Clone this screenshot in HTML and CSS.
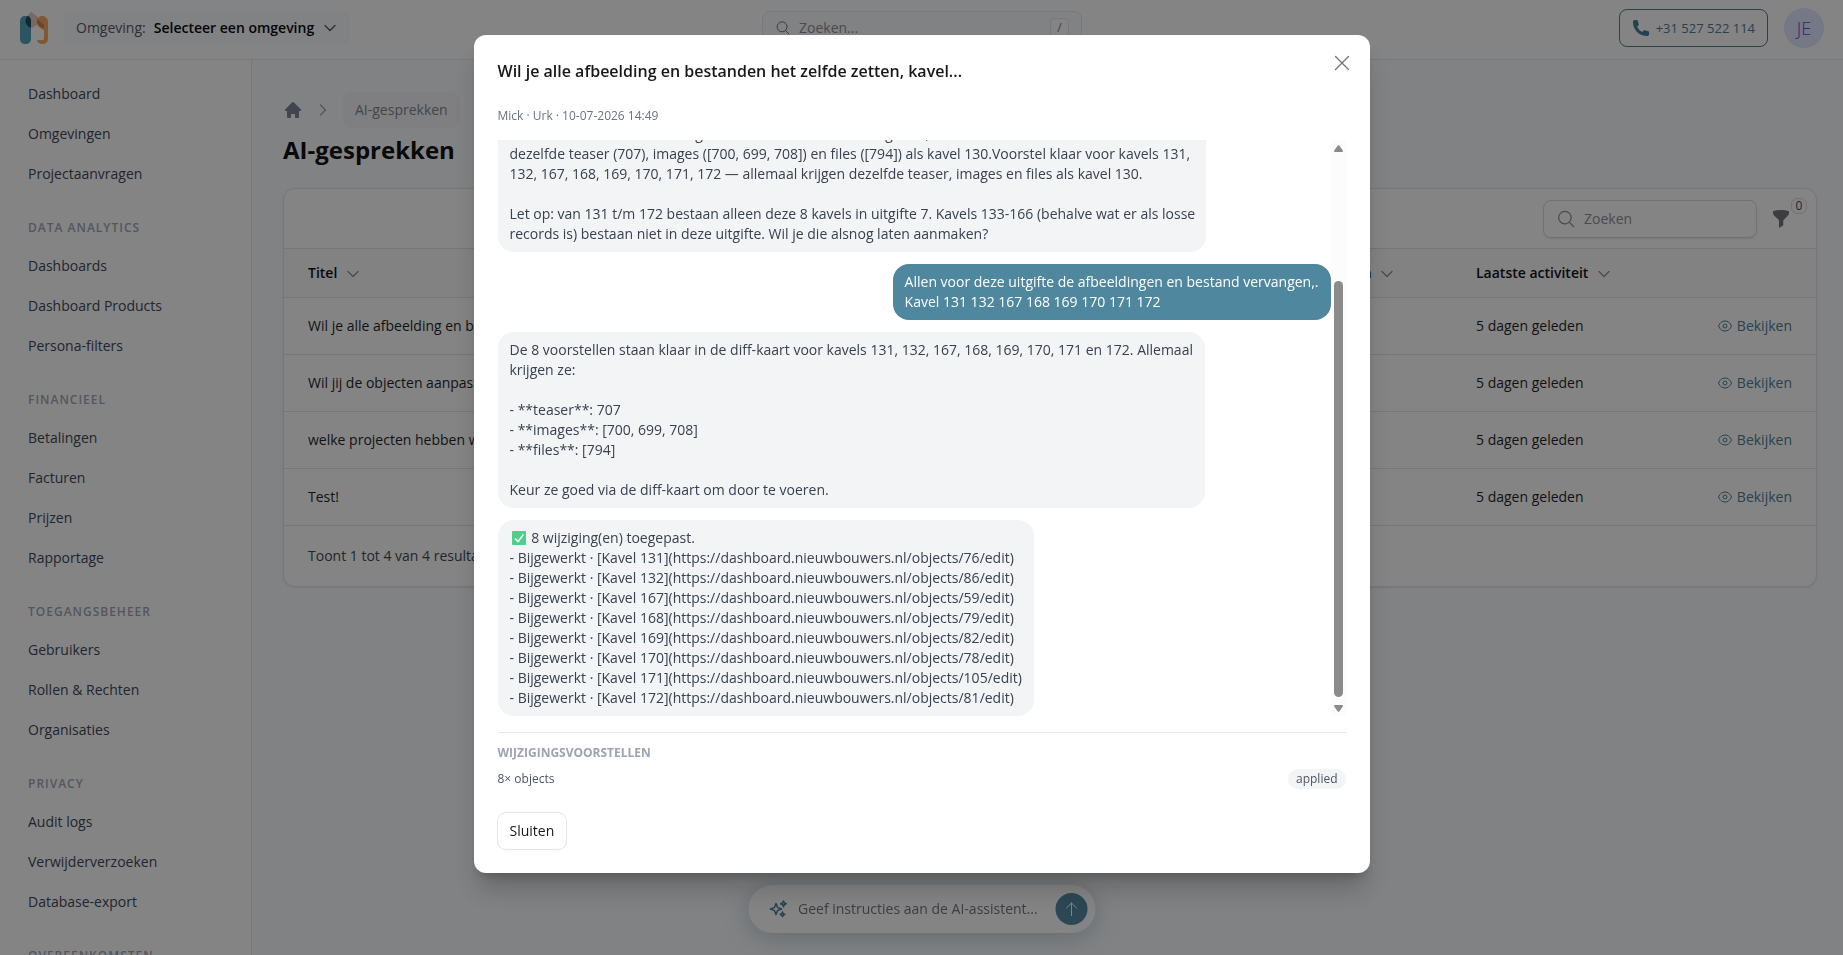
FILE: index.html
```html
<!DOCTYPE html>
<html lang="nl">
<head>
    <meta charset="UTF-8">
    <meta name="viewport" content="width=device-width, initial-scale=1.0">
    <title>AI-gesprekken</title>
    <link rel="stylesheet" href="styles.css">
</head>
<body>
    <!-- shared icons -->
    <svg width="0" height="0" class="sprite">
        <symbol id="chevron" viewBox="0 0 16 16"><path d="M3 5.500l5 5 5-5" fill="none" stroke="currentColor" stroke-width="1.300" stroke-linecap="round" stroke-linejoin="round"/></symbol>
        <symbol id="search" viewBox="0 0 24 24"><path d="M21 21l-5.200-5.200m0 0A7.500 7.500 0 1 0 5.200 5.200a7.500 7.500 0 0 0 10.600 10.600z" fill="none" stroke="currentColor" stroke-width="1.500" stroke-linecap="round"/></symbol>
        <symbol id="eye" viewBox="0 0 16 16"><g fill="none" stroke="currentColor"><path d="M1.500 8C3 4.500 5.300 3 8 3s5 1.500 6.500 5C13 11.500 10.700 13 8 13S3 11.500 1.500 8z"/><circle cx="8" cy="8" r="2"/></g></symbol>
    </svg>

    <header class="topbar">
        <div class="topbar-left">
            <a href="#" class="logo" aria-label="Home">
                <svg width="28" height="32" viewBox="0 0 28 32">
                    <path d="M11 0l7 5v7l-6 4-6-6V5z" fill="#ecc4ba"/>
                    <path d="M0 9.500C0 6 2 4 5.500 4S11 6 11 9.500v17c0 3.500-2 5.500-5.500 5.500S0 30 0 26.500z" fill="#4f9fb8"/>
                    <path d="M17 9.500C17 6 19.500 4 22.500 4S28 6.500 28 9.500v17c0 3.500-2 5.500-5.500 5.500-3 0-5.200-1.500-5.500-4h5c1.500 0 2-.5 2-2v-8c-4-1.500-7-4-7-8.500z" fill="#f9a55c"/>
                    <path d="M8 4c2 .8 3 3 3 5.500V16c-3.500-1.500-5.500-4-5.500-7C5.500 6.500 6.500 5 8 4z" fill="#0e4a56"/>
                    <path d="M17.500 7l6.500 6v3c-4-1-7-3-7-6.500 0-1 .1-1.800.5-2.500z" fill="#d87a3a"/>
                </svg>
            </a>
            <button type="button" class="env-select">
                <span>Omgeving:</span>
                <strong>Selecteer een omgeving</strong>
                <svg width="16" height="16"><use href="#chevron"/></svg>
            </button>
        </div>
        <div class="global-search">
            <svg width="16" height="16"><use href="#search"/></svg>
            <input type="search" placeholder="Zoeken..." aria-label="Zoeken in dashboard">
            <kbd>/</kbd>
        </div>
        <div class="topbar-right">
            <a href="tel:+31527522114" class="phone">
                <svg width="18" height="18" viewBox="0 0 20 20"><path d="M1 3c0-1 1-2 2-2h2c.8 0 1.400.4 1.600 1.200l.9 3.500c.2.700 0 1.300-.5 1.700L5.600 8.700a12 12 0 0 0 5.700 5.700l1.300-1.400c.4-.5 1-.7 1.700-.5l3.500.9c.8.200 1.200.8 1.200 1.600v2c0 1-1 2-2 2C8 19 1 12 1 3z" fill="currentColor"/></svg>
                +31 527 522 114
            </a>
            <button type="button" class="avatar">JE</button>
        </div>
    </header>

    <div class="layout">
        <nav class="sidebar">
            <a href="#">Dashboard</a>
            <a href="#">Omgevingen</a>
            <a href="#">Projectaanvragen</a>
            <h2>Data analytics</h2>
            <a href="#">Dashboards</a>
            <a href="#">Dashboard Products</a>
            <a href="#">Persona-filters</a>
            <h2>Financieel</h2>
            <a href="#">Betalingen</a>
            <a href="#">Facturen</a>
            <a href="#">Prijzen</a>
            <a href="#">Rapportage</a>
            <h2>Toegangsbeheer</h2>
            <a href="#">Gebruikers</a>
            <a href="#">Rollen &amp; Rechten</a>
            <a href="#">Organisaties</a>
            <h2>Privacy</h2>
            <a href="#">Audit logs</a>
            <a href="#">Verwijderverzoeken</a>
            <a href="#">Database-export</a>
            <h2>Overeenkomsten</h2>
        </nav>

        <main class="content">
            <div class="breadcrumb">
                <a href="#" aria-label="Home"><svg width="20" height="20" viewBox="0 0 20 20"><path d="M9.300 2.300a1 1 0 0 1 1.400 0l7 7a1 1 0 0 1-.7 1.700H16v6a1 1 0 0 1-1 1h-2a1 1 0 0 1-1-1v-3H8v3a1 1 0 0 1-1 1H5a1 1 0 0 1-1-1v-6H3a1 1 0 0 1-.7-1.700z" fill="currentColor"/></svg></a>
                <svg class="crumb-arrow" width="16" height="16"><use href="#chevron"/></svg>
                <span class="crumb">AI-gesprekken</span>
            </div>
            <h1>AI-gesprekken</h1>

            <section class="card">
                <div class="card-toolbar">
                    <div class="table-search">
                        <svg width="20" height="20"><use href="#search"/></svg>
                        <input type="search" placeholder="Zoeken" aria-label="Zoeken in tabel">
                    </div>
                    <button type="button" class="filter" aria-label="Filters">
                        <svg width="16" height="18" viewBox="0 0 16 18"><path d="M0 1.200C2.500.4 5 0 8 0s5.500.4 8 1.200V3c0 1-.4 1.800-1 2.400l-4 4c-.5.500-.7 1-.7 1.700v3.300c0 .7-.3 1.200-.9 1.600L6 18v-7c0-.6-.2-1.200-.6-1.600L1 5.400C.3 4.800 0 4 0 3z" fill="currentColor"/></svg>
                        <span class="filter-count">0</span>
                    </button>
                </div>
                <table>
                    <colgroup>
                        <col class="col-title"><col><col class="col-count"><col class="col-date"><col class="col-action">
                    </colgroup>
                    <thead>
                        <tr>
                            <th>Titel <svg width="16" height="16"><use href="#chevron"/></svg></th>
                            <th></th>
                            <th>Berichten <svg width="16" height="16"><use href="#chevron"/></svg></th>
                            <th>Laatste activiteit <svg width="16" height="16"><use href="#chevron"/></svg></th>
                            <th></th>
                        </tr>
                    </thead>
                    <tbody>
                        <tr>
                            <td>Wil je alle afbeelding en bestanden het zelfde zetten, kavel...</td><td></td><td></td>
                            <td>5 dagen geleden</td>
                            <td class="action"><a href="#"><svg width="16" height="16"><use href="#eye"/></svg>Bekijken</a></td>
                        </tr>
                        <tr>
                            <td>Wil jij de objecten aanpassen</td><td></td><td></td>
                            <td>5 dagen geleden</td>
                            <td class="action"><a href="#"><svg width="16" height="16"><use href="#eye"/></svg>Bekijken</a></td>
                        </tr>
                        <tr>
                            <td>welke projecten hebben we</td><td></td><td></td>
                            <td>5 dagen geleden</td>
                            <td class="action"><a href="#"><svg width="16" height="16"><use href="#eye"/></svg>Bekijken</a></td>
                        </tr>
                        <tr>
                            <td>Test!</td><td></td><td></td>
                            <td>5 dagen geleden</td>
                            <td class="action"><a href="#"><svg width="16" height="16"><use href="#eye"/></svg>Bekijken</a></td>
                        </tr>
                    </tbody>
                </table>
                <div class="card-footer">Toont 1 tot 4 van 4 resultaten</div>
            </section>
        </main>
    </div>

    <div class="assistant">
        <svg width="20" height="20" viewBox="0 0 20 20"><g fill="none" stroke="currentColor" stroke-width="1.500" stroke-linejoin="round"><path d="M7.500 4.500l1.400 3.600a1 1 0 0 0 .5.500l3.600 1.400-3.600 1.400a1 1 0 0 0-.5.500l-1.400 3.600-1.400-3.600a1 1 0 0 0-.5-.5L2 10l3.600-1.400a1 1 0 0 0 .5-.5z"/><path d="M15 2l.8 2 2 .8-2 .8-.8 2-.8-2-2-.8 2-.8zM14 13l.7 1.700 1.700.7-1.700.7-.7 1.700-.7-1.700-1.700-.7 1.700-.7z"/></g></svg>
        <input type="text" placeholder="Geef instructies aan de AI-assistent..." aria-label="Instructie">
        <button type="button" aria-label="Versturen">
            <svg width="16" height="16" viewBox="0 0 16 16"><path d="M8 14.500V2M3 7l5-5 5 5" fill="none" stroke="currentColor" stroke-linecap="round" stroke-linejoin="round"/></svg>
        </button>
    </div>

    <div class="overlay">
        <div class="modal" role="dialog" aria-modal="true" aria-labelledby="modal-title">
            <button type="button" class="modal-close" aria-label="Sluiten">
                <svg width="16" height="16" viewBox="0 0 16 16"><path d="M1.500 1.500l13 13M14.500 1.500l-13 13" stroke="currentColor" stroke-width="1.300" stroke-linecap="round"/></svg>
            </button>
            <h2 id="modal-title">Wil je alle afbeelding en bestanden het zelfde zetten, kavel...</h2>
            <p class="meta">Mick · Urk · 10-07-2026 14:49</p>

            <div class="chat">
                <div class="messages">
                    <div class="message">Gedaan. Ik heb een voorstel gemaakt voor de kavels in uitgifte 7, met
dezelfde teaser (707), images ([700, 699, 708]) en files ([794]) als kavel 130.Voorstel klaar voor kavels 131,
132, 167, 168, 169, 170, 171, 172 — allemaal krijgen dezelfde teaser, images en files als kavel 130.

Let op: van 131 t/m 172 bestaan alleen deze 8 kavels in uitgifte 7. Kavels 133-166 (behalve wat er als losse
records is) bestaan niet in deze uitgifte. Wil je die alsnog laten aanmaken?</div>
                    <div class="message user">Allen voor deze uitgifte de afbeeldingen en bestand vervangen,.
Kavel 131 132 167 168 169 170 171 172</div>
                    <div class="message">De 8 voorstellen staan klaar in de diff-kaart voor kavels 131, 132, 167, 168, 169, 170, 171 en 172. Allemaal
krijgen ze:

- **teaser**: 707
- **images**: [700, 699, 708]
- **files**: [794]

Keur ze goed via de diff-kaart om door te voeren.</div>
                    <div class="message"><svg class="check" width="18" height="14" viewBox="0 0 18 14"><rect x="2" width="14" height="14" rx="1" fill="#4fd08a"/><path d="M5 7.500l3 3 5.500-7" fill="none" stroke="#fff" stroke-width="1.500"/></svg> 8 wijziging(en) toegepast.
- Bijgewerkt · [Kavel 131](https://dashboard.nieuwbouwers.nl/objects/76/edit)
- Bijgewerkt · [Kavel 132](https://dashboard.nieuwbouwers.nl/objects/86/edit)
- Bijgewerkt · [Kavel 167](https://dashboard.nieuwbouwers.nl/objects/59/edit)
- Bijgewerkt · [Kavel 168](https://dashboard.nieuwbouwers.nl/objects/79/edit)
- Bijgewerkt · [Kavel 169](https://dashboard.nieuwbouwers.nl/objects/82/edit)
- Bijgewerkt · [Kavel 170](https://dashboard.nieuwbouwers.nl/objects/78/edit)
- Bijgewerkt · [Kavel 171](https://dashboard.nieuwbouwers.nl/objects/105/edit)
- Bijgewerkt · [Kavel 172](https://dashboard.nieuwbouwers.nl/objects/81/edit)</div>
                </div>
                <div class="scrollbar">
                    <svg width="9" height="7" viewBox="0 0 9 7"><path d="M4.500 0C5 0 9 5.500 9 6s-.3 1-1 1H1c-.7 0-1-.5-1-1s4-6 4.500-6z" fill="#8b8b8b"/></svg>
                    <div class="thumb"></div>
                    <svg width="9" height="7" viewBox="0 0 9 7"><path d="M4.500 7C5 7 9 1.500 9 1s-.3-1-1-1H1C.3 0 0 .5 0 1s4 6 4.500 6z" fill="#8b8b8b"/></svg>
                </div>
            </div>

            <div class="proposals">
                <h3>Wijzigingsvoorstellen</h3>
                <div class="proposal">
                    <span>8× objects</span>
                    <span class="status">applied</span>
                </div>
            </div>
            <button type="button" class="btn">Sluiten</button>
        </div>
    </div>
</body>
</html>
```
FILE: styles.css
```css
* {
    box-sizing: border-box;
}
body {
    margin: 0;
    height: 100vh;
    overflow: hidden;
    display: flex;
    flex-direction: column;
    font-family: "Open Sans", "Noto Sans", sans-serif;
    font-size: 14px;
    line-height: 20px;
    color: #18181b;
    background: #f9fafb;
}
h1, h2, h3, p {
    margin: 0;
}
a {
    color: inherit;
    text-decoration: none;
}
button, input {
    font: inherit;
    color: inherit;
}
button {
    cursor: pointer;
}
svg {
    flex: none;
}
.sprite {
    position: absolute;
}
input {
    flex: 1;
    min-width: 0;
    padding: 0;
    border: none;
    outline: none;
    background: none;
}

/* top bar */
.topbar {
    flex: none;
    display: grid;
    grid-template-columns: 1fr 320px 1fr;
    align-items: center;
    padding: 8px 19px 11px 20px;
    background: #fff;
    border-bottom: 1px solid #e5e7eb;
}
.topbar-left, .topbar-right {
    display: flex;
    align-items: center;
    gap: 16px;
}
.topbar-right {
    justify-content: flex-end;
}
.logo {
    display: flex;
}
.env-select {
    display: flex;
    align-items: center;
    gap: 8px;
    height: 32px;
    padding: 0 12px;
    border: none;
    border-radius: 6px;
    background: #f9fafb;
    color: #52525b;
}
.env-select strong {
    font-weight: 600;
    color: #000;
}
.global-search {
    display: flex;
    align-items: center;
    gap: 8px;
    height: 34px;
    padding: 0 12px;
    border: 1px solid #e5e7eb;
    border-radius: 8px;
    background: #f9fafb;
    color: #71717a;
}
input::placeholder {
    color: #8b8b94;
    opacity: 1;
}
kbd {
    width: 19px;
    border: 1px solid #e5e7eb;
    border-radius: 4px;
    font-family: inherit;
    font-size: 12px;
    line-height: 18px;
    text-align: center;
    background: #fff;
}
.phone {
    display: flex;
    align-items: center;
    gap: 6px;
    height: 38px;
    padding: 0 12px;
    border: 1px solid #437a91;
    border-radius: 8px;
    font-size: 13px;
    font-weight: 500;
    color: #437a91;
}
.avatar {
    width: 40px;
    height: 40px;
    padding: 0;
    border: none;
    border-radius: 50%;
    background: #e0e7ff;
    font-size: 18px;
    font-weight: 300;
    color: #4f46e5;
}

/* side menu */
.layout {
    flex: 1;
    min-height: 0;
    display: flex;
}
.sidebar {
    flex: none;
    width: 252px;
    padding: 14px 28px;
    overflow: hidden;
    background: #fff;
    border-right: 1px solid #e5e7eb;
}
.sidebar a {
    display: block;
    line-height: 40px;
    font-weight: 500;
    color: #374151;
}
.sidebar h2 {
    margin: 26px 0 10px;
    font-size: 12px;
    line-height: 16px;
    font-weight: 600;
    letter-spacing: 1px;
    text-transform: uppercase;
    color: #9ca3af;
}

/* page */
.content {
    flex: 1;
    min-width: 0;
    padding: 32px 26px 32px 31px;
}
.breadcrumb {
    display: flex;
    align-items: center;
    gap: 12px;
    margin-bottom: 6px;
    color: #9ca3af;
}
.breadcrumb a {
    display: flex;
    color: #7b8190;
}
.crumb-arrow {
    transform: rotate(-90deg);
}
.crumb {
    padding: 8px 12px;
    border-radius: 8px;
    background: #f4f5f6;
    font-weight: 500;
    color: #7b8190;
}
h1 {
    margin-bottom: 22px;
    font-size: 24px;
    line-height: 32px;
    font-weight: 700;
    color: #09090b;
}
.card {
    background: #fff;
    border: 1px solid #e4e4e7;
    border-radius: 12px;
    box-shadow: 0 1px 2px rgba(0,0,0,0.08);
    overflow: hidden;
}
.card-toolbar {
    display: flex;
    align-items: center;
    justify-content: flex-end;
    gap: 16px;
    height: 60px;
    padding: 0 27px;
    border-bottom: 1px solid #e4e4e7;
}
.table-search {
    display: flex;
    align-items: center;
    gap: 8px;
    width: 214px;
    height: 38px;
    padding: 0 12px;
    border: 1px solid #d9d9de;
    border-radius: 8px;
    box-shadow: 0 1px 2px rgba(0,0,0,0.1);
    color: #8b8b94;
}
.filter {
    position: relative;
    display: flex;
    padding: 0;
    border: none;
    background: none;
    color: #71717a;
}
.filter-count {
    position: absolute;
    right: -18px;
    bottom: 14px;
    width: 16px;
    border: 1px solid #dcdce0;
    border-radius: 6px;
    font-size: 12px;
    line-height: 14px;
    background: #fafafa;
    color: #3f3f46;
}
table {
    width: 100%;
    border-collapse: collapse;
    table-layout: fixed;
}
.col-title {
    width: 38%;
}
.col-count {
    width: 170px;
}
.col-date {
    width: 216px;
}
.col-action {
    width: 148px;
}
th, td {
    padding: 0 24px;
    text-align: left;
    white-space: nowrap;
    border-bottom: 1px solid #e4e4e7;
}
th {
    height: 48px;
    background: #fafafa;
    font-weight: 600;
    color: #09090b;
}
th svg {
    margin-left: 4px;
    vertical-align: -4px;
    color: #8b8b94;
}
td {
    height: 57px;
}
.action a {
    display: flex;
    align-items: center;
    justify-content: flex-end;
    gap: 4px;
    font-weight: 500;
    color: #437a91;
}
.card-footer {
    padding: 20px 24px;
    color: #3f3f46;
}

/* floating assistant */
.assistant {
    position: fixed;
    left: 50%;
    bottom: 22px;
    transform: translateX(-50%);
    display: flex;
    align-items: center;
    gap: 10px;
    width: 347px;
    height: 48px;
    padding: 0 8px 0 20px;
    border-radius: 24px;
    background: #fff;
    box-shadow: 0 4px 24px rgba(79,135,158,0.4);
    font-weight: 500;
    color: #437a91;
}
.assistant input::placeholder {
    color: #71717a;
}
.assistant button {
    display: flex;
    align-items: center;
    justify-content: center;
    width: 32px;
    height: 32px;
    padding: 0;
    border: none;
    border-radius: 50%;
    background: #4f879e;
    color: #fff;
}

/* modal */
.overlay {
    position: fixed;
    inset: 0;
    display: flex;
    align-items: flex-start;
    justify-content: center;
    padding: 35px 16px;
    background: rgba(9,9,11,0.5);
}
.modal {
    position: relative;
    width: 100%;
    max-width: 896px;
    padding: 24px;
    border-radius: 12px;
    background: #fff;
    box-shadow: 0 20px 25px -5px rgba(0,0,0,0.2), 0 8px 10px -6px rgba(0,0,0,0.2);
}
.modal-close {
    position: absolute;
    top: 16px;
    right: 16px;
    display: flex;
    padding: 4px;
    border: none;
    background: none;
    color: #71717a;
}
.modal h2 {
    font-size: 16px;
    line-height: 24px;
    font-weight: 600;
    color: #18181b;
}
.meta {
    margin: 25px 0 16px;
    font-size: 12px;
    line-height: 16px;
    color: #6b7280;
}
.chat {
    display: flex;
    height: 576px;
}
.messages {
    flex: 1;
    min-width: 0;
    display: flex;
    flex-direction: column;
    justify-content: flex-end;
    align-items: flex-start;
    gap: 12px;
    overflow: hidden;
}
.message {
    flex: none;
    max-width: 85%;
    padding: 8px 12px;
    border-radius: 16px;
    background: #f3f4f6;
    color: #374151;
    white-space: pre;
}
.message.user {
    align-self: flex-end;
    background: #4f879e;
    color: #fff;
    font-weight: 500;
}
.check {
    vertical-align: -2px;
}
.scrollbar {
    display: flex;
    flex-direction: column;
    align-items: center;
    width: 15px;
    padding: 5px 0 4px;
    background: #fcfcfc;
}
.thumb {
    width: 9px;
    height: 416px;
    margin: auto 0 8px;
    border-radius: 5px;
    background: #8b8b8b;
}
.proposals {
    margin: 16px 0 24px;
    padding-top: 12px;
    border-top: 1px solid #e5e7eb;
    font-size: 12px;
    line-height: 16px;
    color: #4b5563;
}
.proposals h3 {
    margin-bottom: 8px;
    font-size: 12px;
    font-weight: 700;
    text-transform: uppercase;
    color: #9ca3af;
}
.proposal {
    display: flex;
    align-items: center;
    justify-content: space-between;
}
.status {
    padding: 2px 8px;
    border-radius: 10px;
    background: #f3f4f6;
}
.btn {
    height: 36px;
    padding: 0 12px;
    border: none;
    border-radius: 8px;
    background: #fff;
    box-shadow: 0 0 0 1px #e4e4e7, 0 1px 2px rgba(0,0,0,0.05);
    font-weight: 500;
}
```
